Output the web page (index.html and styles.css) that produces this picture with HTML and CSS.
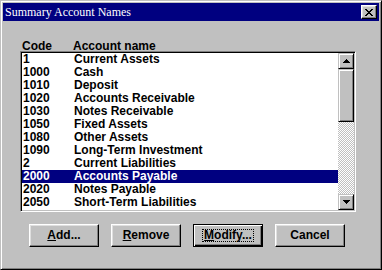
FILE: index.html
```html
<!DOCTYPE html>
<html lang="en">
<head>
    <meta charset="UTF-8">
    <title>Summary Account Names</title>
    <link rel="stylesheet" href="styles.css">
</head>
<body>
    <div class="window">
        <div class="titlebar">
            <span class="title">Summary Account Names</span>
            <div class="close-btn">
                <svg width="8" height="7" viewBox="0 0 8 7" shape-rendering="crispEdges">
                    <path d="M0 0h2v1H0zM6 0h2v1H6zM1 1h2v1H1zM5 1h2v1H5zM2 2h4v1H2zM3 3h2v1H3zM2 4h4v1H2zM1 5h2v1H1zM5 5h2v1H5zM0 6h2v1H0zM6 6h2v1H6z" fill="#000"/>
                </svg>
            </div>
        </div>

        <div class="dialog-body">
            <div class="list-header">
                <span>Code</span>
                <span>Account name</span>
            </div>

            <div class="listbox">
                <ul class="list-items">
                    <li><span>1</span><span>Current Assets</span></li>
                    <li><span>1000</span><span>Cash</span></li>
                    <li><span>1010</span><span>Deposit</span></li>
                    <li><span>1020</span><span>Accounts Receivable</span></li>
                    <li><span>1030</span><span>Notes Receivable</span></li>
                    <li><span>1050</span><span>Fixed Assets</span></li>
                    <li><span>1080</span><span>Other Assets</span></li>
                    <li><span>1090</span><span>Long-Term Investment</span></li>
                    <li><span>2</span><span>Current Liabilities</span></li>
                    <li class="selected"><span>2000</span><span>Accounts Payable</span></li>
                    <li><span>2020</span><span>Notes Payable</span></li>
                    <li><span>2050</span><span>Short-Term Liabilities</span></li>
                </ul>

                <div class="scrollbar">
                    <div class="sb-btn">
                        <svg width="7" height="4" viewBox="0 0 7 4" shape-rendering="crispEdges">
                            <path d="M3 0h1v1H3zM2 1h3v1H2zM1 2h5v1H1zM0 3h7v1H0z" fill="#000"/>
                        </svg>
                    </div>
                    <div class="sb-thumb"></div>
                    <div class="sb-track"></div>
                    <div class="sb-btn">
                        <svg width="7" height="4" viewBox="0 0 7 4" shape-rendering="crispEdges">
                            <path d="M0 0h7v1H0zM1 1h5v1H1zM2 2h3v1H2zM3 3h1v1H3z" fill="#000"/>
                        </svg>
                    </div>
                </div>
            </div>

            <div class="buttons">
                <button class="btn"><span><u>A</u>dd...</span></button>
                <button class="btn"><span><u>R</u>emove</span></button>
                <button class="btn btn-default"><span class="focus"><u>M</u>odify...</span></button>
                <button class="btn">Cancel</button>
            </div>
        </div>
    </div>
</body>
</html>
```

FILE: styles.css
```css
/* Диалог в стиле Windows 95 */
* {
    margin: 0;
    padding: 0;
    box-sizing: border-box;
}

body {
    font-family: 'Liberation Sans', Arial, sans-serif;
    font-size: 12px;
    color: #000;
    background: #c0c0c0;
}

.window {
    width: 382px;
    height: 270px;
    background: #c0c0c0;
    border: 1px solid;
    border-color: #c0c0c0 #000 #000 #c0c0c0;
    padding: 2px;
    box-shadow: inset 1px 1px #fff, inset -1px -1px #808080;
}

/* Заголовок окна */
.titlebar {
    height: 18px;
    background: #000080;
    display: flex;
    align-items: center;
    justify-content: space-between;
    padding: 0 2px;
}

.title {
    font-family: 'Liberation Serif', 'Times New Roman', serif;
    font-size: 12px;
    line-height: 18px;
    color: #fff;
}

.close-btn {
    width: 16px;
    height: 14px;
    background: #c0c0c0;
    border: 1px solid;
    border-color: #fff #000 #000 #fff;
    box-shadow: inset -1px -1px #808080, inset 1px 1px #dfdfdf;
    display: flex;
    align-items: center;
    justify-content: center;
}

.close-btn svg {
    display: block;
}

/* Содержимое */
.dialog-body {
    padding: 20px 0 0 17px;
}

.list-header {
    display: grid;
    grid-template-columns: 51px 1fr;
    padding-left: 2px;
    height: 10px;
    line-height: 10px;
    font-weight: bold;
}

.listbox {
    width: 336px;
    height: 161px;
    display: flex;
    background: #fff;
    border: 1px solid;
    border-color: #808080 #fff #fff #808080;
    padding: 1px;
    box-shadow: inset 1px 1px #000, inset -1px -1px #c0c0c0;
}

.list-items {
    list-style: none;
    flex: 1;
    overflow: hidden;
    font-weight: bold;
}

.list-items li {
    display: grid;
    grid-template-columns: 51px 1fr;
    padding-left: 1px;
    height: 13px;
    line-height: 13px;
    white-space: nowrap;
}

.list-items li.selected {
    background: #000080;
    color: #fff;
}

/* Полоса прокрутки */
.scrollbar {
    width: 16px;
    display: flex;
    flex-direction: column;
}

.sb-btn,
.sb-thumb {
    background: #c0c0c0;
    border: 1px solid;
    border-color: #c0c0c0 #000 #000 #c0c0c0;
    box-shadow: inset 1px 1px #fff, inset -1px -1px #808080;
}

.sb-btn {
    height: 16px;
    display: flex;
    align-items: center;
    justify-content: center;
}

.sb-btn svg {
    display: block;
}

.sb-thumb {
    height: 53px;
}

.sb-track {
    flex: 1;
    background: repeating-conic-gradient(#c0c0c0 0 25%, #fff 0 50%) 0 0 / 2px 2px;
}

/* Кнопки */
.buttons {
    display: flex;
    gap: 12px;
    margin-top: 12px;
    padding-left: 9px;
}

.btn {
    width: 70px;
    height: 23px;
    background: #c0c0c0;
    border: 1px solid;
    border-color: #fff #000 #000 #fff;
    box-shadow: inset -1px -1px #808080, inset 1px 1px #dfdfdf;
    font-family: 'Liberation Sans', Arial, sans-serif;
    font-size: 12px;
    font-weight: bold;
    line-height: 13px;
    color: #000;
    display: flex;
    align-items: center;
    justify-content: center;
}

.btn-default {
    border-color: #000;
    box-shadow: inset 1px 1px #fff, inset -1px -1px #000, inset -2px -2px #808080;
}

.focus {
    border: 1px dotted #000;
    line-height: 11px;
    padding: 0 1px;
}
```
